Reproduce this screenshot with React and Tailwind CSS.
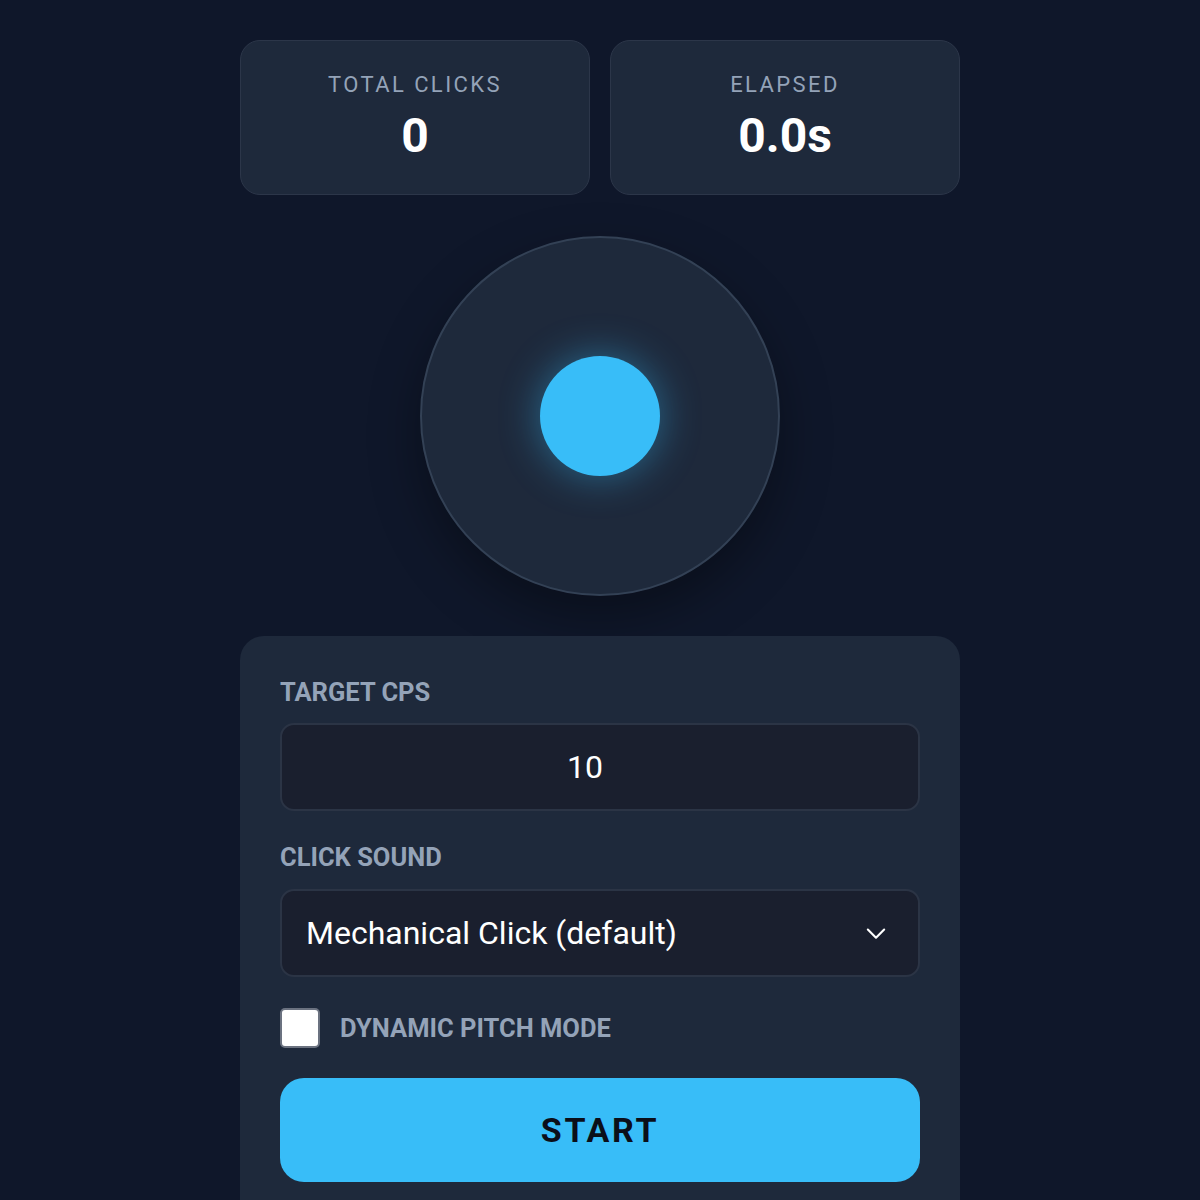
export default function App() {
  return (
    <div className="min-h-[1200px] w-full bg-[#0f172a] flex justify-center" style={{ fontFamily: 'Roboto, "Noto Sans", sans-serif' }}>
      <div className="w-[720px] pt-[40px] flex flex-col items-center">
        <div className="grid grid-cols-2 gap-[20px] w-full">
          <div className="h-[155px] rounded-[20px] bg-[#1e293b] border border-[#2c3649] flex flex-col items-center pt-[28px]">
            <div className="text-[22px] leading-[32px] tracking-[0.11em] text-[#94a3b8]">TOTAL CLICKS</div>
            <div className="text-[48px] leading-[56px] font-bold text-white mt-[7px]">0</div>
          </div>
          <div className="h-[155px] rounded-[20px] bg-[#1e293b] border border-[#2c3649] flex flex-col items-center pt-[28px]">
            <div className="text-[22px] leading-[32px] tracking-[0.11em] text-[#94a3b8]">ELAPSED</div>
            <div className="text-[48px] leading-[56px] font-bold text-white mt-[7px]">0.0s</div>
          </div>
        </div>

        <div className="mt-[41px] w-[360px] h-[360px] rounded-full bg-[#1e293b] border-2 border-[#334155] shadow-[0_20px_50px_rgba(0,0,0,0.35)] flex items-center justify-center">
          <div className="w-[120px] h-[120px] rounded-full bg-[#38bdf8] shadow-[0_0_40px_rgba(56,189,248,0.45)]"></div>
        </div>

        <div className="mt-[40px] w-full rounded-t-[24px] bg-[#1e293b] px-[40px] pt-[38px] pb-[40px]">
          <div className="text-[25.5px] leading-[36px] font-bold text-[#94a3b8]">TARGET CPS</div>
          <div className="mt-[13px] h-[88px] rounded-[14px] bg-[#1a1f2e] border-2 border-[#2b3445] flex items-center justify-center pr-[30px] text-[32px] text-white">10</div>

          <div className="mt-[28px] text-[25.5px] leading-[36px] font-bold text-[#94a3b8]">CLICK SOUND</div>
          <div className="mt-[14px] h-[88px] rounded-[14px] bg-[#1a1f2e] border-2 border-[#2b3445] flex items-center justify-between pl-[24px] pr-[28px] text-[32px] text-white">
            <span>Mechanical Click (default)</span>
            <svg width="28" height="28" viewBox="0 0 24 24" fill="none" stroke="white" strokeWidth="1.8" strokeLinecap="round" strokeLinejoin="round"><path d="M5 9l7 7 7-7" /></svg>
          </div>

          <div className="mt-[31px] flex items-center gap-[20px]">
            <div className="w-[40px] h-[40px] rounded-[5px] bg-white border-2 border-[#6b7280]"></div>
            <div className="text-[25.5px] leading-[36px] font-bold text-[#94a3b8]">DYNAMIC PITCH MODE</div>
          </div>

          <div className="mt-[30px] h-[104px] rounded-[24px] bg-[#38bdf8] flex items-center justify-center text-[34px] font-bold tracking-[0.08em] text-[#0b0f19]">START</div>
        </div>
      </div>
    </div>
  );
}
